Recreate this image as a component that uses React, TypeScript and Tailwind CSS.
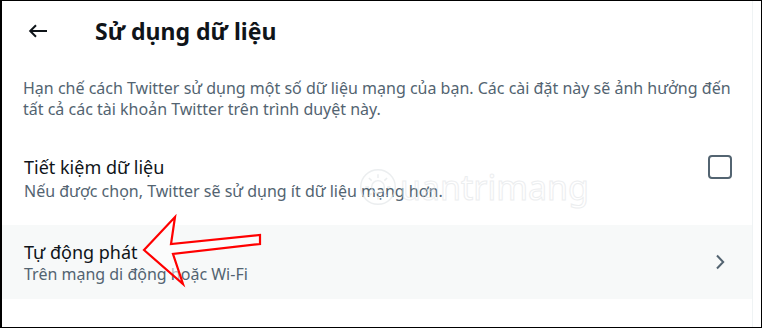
import React from "react";

const font = "font-['Noto_Sans','Open_Sans',sans-serif]";

const BackArrow = () => (
  <svg width="20" height="14" viewBox="0 0 20 14" fill="none" stroke="#0f1419" strokeWidth="2">
    <path d="M19 7H2.5" />
    <path d="M8 1.2L2.2 7l5.8 5.8" />
  </svg>
);

const Chevron = () => (
  <svg width="10" height="16" viewBox="0 0 10 16" fill="none" stroke="#536471" strokeWidth="2">
    <path d="M2 1.5L8.2 8 2 14.5" />
  </svg>
);

// red outline arrow drawn on top of the screenshot
const PointerArrow = () => (
  <svg
    className="absolute left-0 top-0 pointer-events-none"
    width="762"
    height="328"
    viewBox="0 0 762 328"
  >
    <path
      d="M142 249 L173 216 L169 243 L258 234 L258 243 L171 253 L181 283 Z"
      fill="white"
      fillOpacity="0.55"
      stroke="#f00"
      strokeWidth="2.2"
      strokeLinejoin="miter"
    />
  </svg>
);

// faint site watermark
const Watermark = () => (
  <div className="absolute left-[356px] top-[166px] flex items-center pointer-events-none opacity-60">
    <svg width="40" height="40" viewBox="0 0 44 44" fill="none" stroke="#dfe3e6" strokeWidth="1.6">
      <circle cx="22" cy="22" r="19" />
      <circle cx="22" cy="22" r="7" />
      <path d="M22 8v4M22 32v4M8 22h4M32 22h4M12 12l3 3M29 29l3 3M12 32l3-3M29 15l3-3" />
    </svg>
    <span className="ml-[2px] text-[34px] leading-none font-['Noto_Sans',sans-serif] text-transparent [-webkit-text-stroke:1px_#dfe3e6]">
      uantrimang
    </span>
  </div>
);

export default function App() {
  return (
    <div className={`relative w-[762px] h-[328px] overflow-hidden bg-white border-black border-t border-b border-r border-l-2 ${font}`}>
      <div className="w-[751px] h-full border-r border-[#eff3f4] flex flex-col">
        <div className="h-[60px] flex items-center pl-[26px] shrink-0">
          <BackArrow />
          <h1 className="ml-[47px] text-[23px] font-bold text-[#0f1419] leading-none">
            Sử dụng dữ liệu
          </h1>
        </div>
        <p className="mt-[17px] pl-[21px] w-[742px] text-[16px] leading-[21px] text-[#536471]">
          Hạn chế cách Twitter sử dụng một số dữ liệu mạng của bạn. Các cài đặt này sẽ ảnh hưởng đến
          tất cả các tài khoản Twitter trên trình duyệt này.
        </p>
        <div className="h-[105px] flex items-start pl-[22px] pr-[20px] pt-[35px]">
          <div className="flex-1">
            <div className="text-[18px] leading-[24px] text-[#0f1419]">Tiết kiệm dữ liệu</div>
            <div className="mt-[2px] text-[16px] leading-[21px] text-[#536471]">
              Nếu được chọn, Twitter sẽ sử dụng ít dữ liệu mạng hơn.
            </div>
          </div>
          <div className="w-[24px] h-[24px] rounded-[4px] border-2 border-[#536471]" />
        </div>
        <div className="h-[74px] bg-[#f7f9f9] flex items-center pl-[22px] pr-[27px]">
          <div className="flex-1">
            <div className="text-[18px] leading-[24px] text-[#0f1419]">Tự động phát</div>
            <div className="text-[16px] leading-[21px] text-[#536471]">
              Trên mạng di động hoặc Wi-Fi
            </div>
          </div>
          <Chevron />
        </div>
      </div>
      <Watermark />
      <PointerArrow />
    </div>
  );
}
